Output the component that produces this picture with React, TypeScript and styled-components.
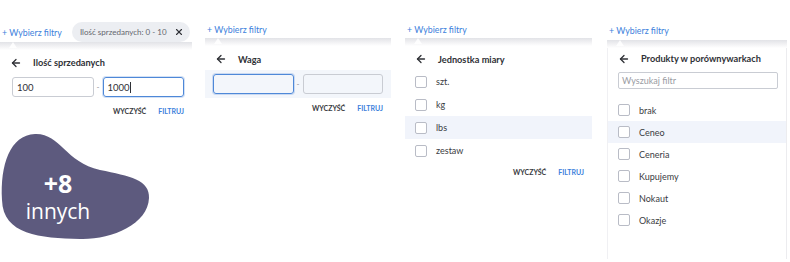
import React from 'react'
import styled, { createGlobalStyle } from 'styled-components'
import { ArrowLeft, X } from 'lucide-react'

const GlobalStyle = createGlobalStyle`
  body {
    margin: 0;
    background: #ffffff;
    font-family: Lato, 'Noto Sans', sans-serif;
    color: #2f3136;
  }
`

const Page = styled.div`
  width: 790px;
  height: 262px;
  display: flex;
  overflow: hidden;
`

const Column = styled.div<{ $width: number; $offset: number }>`
  width: ${(p) => p.$width}px;
  margin-left: ${(p) => p.$offset}px;
  display: flex;
  flex-direction: column;
  flex-shrink: 0;
`

const TopBar = styled.div<{ $top: number; $height: number }>`
  height: ${(p) => p.$height}px;
  margin-top: ${(p) => p.$top}px;
  display: flex;
  align-items: center;
  gap: 10px;
  padding-left: 2px;
`

const PickLink = styled.span`
  font-size: 8.8px;
  color: #3d7fdc;
  white-space: nowrap;
`

const Chip = styled.div`
  height: 20px;
  display: flex;
  align-items: center;
  gap: 7px;
  padding: 0 6px 0 8px;
  border-radius: 10px;
  background: #eceef2;
  font-size: 8px;
  color: #64676e;
  white-space: nowrap;
`

const Strip = styled.div`
  height: 8px;
  position: relative;
  background: linear-gradient(#e2e3e7, #ffffff);
  &::before {
    content: '';
    position: absolute;
    left: 9px;
    top: 0;
    border-left: 4px solid transparent;
    border-right: 4px solid transparent;
    border-bottom: 6px solid #ffffff;
    opacity: 0.85;
  }
`

const Panel = styled.div<{ $bordered?: boolean }>`
  display: flex;
  flex-direction: column;
  background: #fff;
  ${(p) =>
    p.$bordered
      ? 'border-left: 1px solid #f0f0f3; border-right: 1px solid #ececef; padding-bottom: 28px;'
      : ''}
`

const Header = styled.div<{ $height: number }>`
  height: ${(p) => p.$height}px;
  display: flex;
  align-items: center;
  padding: 2px 0 0 10px;
  box-sizing: border-box;
  gap: 11px;
  color: #2f3136;
`

const Title = styled.span`
  font-size: 9.2px;
  font-weight: 700;
`

const RangeRow = styled.div<{ $hover?: boolean; $inset: number }>`
  display: flex;
  align-items: center;
  gap: 3px;
  padding: 4px 8px 4px ${(p) => p.$inset}px;
  background: ${(p) => (p.$hover ? '#f3f6fb' : 'transparent')};
`

const Field = styled.div<{ $focus?: boolean }>`
  flex: 1;
  height: 20px;
  box-sizing: border-box;
  border: 1px solid ${(p) => (p.$focus ? '#4e88d8' : '#c9ccd3')};
  border-radius: 3px;
  box-shadow: ${(p) => (p.$focus ? '0 0 0 1px rgba(78,136,216,0.25)' : 'none')};
  display: flex;
  align-items: center;
  padding-left: 4px;
  font-size: 9.5px;
  color: #2f3136;
`

const Caret = styled.span`
  width: 1px;
  height: 11px;
  background: #2f3136;
`

const Dash = styled.span`
  font-size: 8px;
  color: #8a8d94;
`

const Actions = styled.div<{ $top: number }>`
  display: flex;
  justify-content: flex-end;
  gap: 12px;
  padding: ${(p) => p.$top}px 8px 0 0;
`

const ActionButton = styled.span<{ $primary?: boolean }>`
  font-size: 7px;
  font-weight: 700;
  color: ${(p) => (p.$primary ? '#3d7fdc' : '#3a3c42')};
`

const Search = styled.div`
  height: 17px;
  margin: 5px 8px 10px 10px;
  box-sizing: border-box;
  border: 1px solid #c9ccd3;
  border-radius: 2px;
  display: flex;
  align-items: center;
  padding-left: 3px;
  font-size: 9px;
  color: #9a9ca3;
`

const OptionRow = styled.div<{ $height: number; $hover?: boolean }>`
  height: ${(p) => p.$height}px;
  display: flex;
  align-items: center;
  gap: 9px;
  padding-left: 10px;
  font-size: 9px;
  color: #3a3c42;
  background: ${(p) => (p.$hover ? '#f1f4fb' : 'transparent')};
`

const Box = styled.span`
  width: 12px;
  height: 12px;
  box-sizing: border-box;
  border: 1px solid #b9bcc6;
  border-radius: 2px;
  background: #fff;
`

const Blob = styled.div`
  position: relative;
  width: 152px;
  height: 112px;
  margin-top: 15px;
  display: flex;
  flex-direction: column;
  align-items: center;
  padding: 40px 36px 0 0;
  box-sizing: border-box;
  color: #fff;
  font-family: 'Open Sans', 'Noto Sans', sans-serif;
  svg {
    position: absolute;
    left: 0;
    top: 0;
  }
`

const BlobCount = styled.span`
  position: relative;
  font-size: 25px;
  font-weight: 700;
  line-height: 26px;
`

const BlobLabel = styled.span`
  position: relative;
  font-size: 21px;
  line-height: 24px;
  margin-top: 3px;
`

const BackArrow = () => <ArrowLeft size={12} strokeWidth={2.6} color="#2f3136" />

const Top = ({ top, height, chip }: { top: number; height: number; chip?: string }) => (
  <>
    <TopBar $top={top} $height={height}>
      <PickLink>+ Wybierz filtry</PickLink>
      {chip && (
        <Chip>
          {chip}
          <X size={10} strokeWidth={2.6} color="#2f3136" />
        </Chip>
      )}
    </TopBar>
    <Strip />
  </>
)

const Buttons = ({ top }: { top: number }) => (
  <Actions $top={top}>
    <ActionButton>WYCZYŚĆ</ActionButton>
    <ActionButton $primary>FILTRUJ</ActionButton>
  </Actions>
)

const App = () => {
  const units = ['szt.', 'kg', 'lbs', 'zestaw']
  const shops = ['brak', 'Ceneo', 'Ceneria', 'Kupujemy', 'Nokaut', 'Okazje']

  return (
    <>
      <GlobalStyle />
      <Page>
        <Column $width={192} $offset={0}>
          <Top top={22} height={20} chip="Ilość sprzedanych: 0 - 10" />
          <Panel>
            <Header $height={23}>
              <BackArrow />
              <Title>Ilość sprzedanych</Title>
            </Header>
            <RangeRow $inset={12}>
              <Field>100</Field>
              <Dash>-</Dash>
              <Field $focus>
                1000
                <Caret />
              </Field>
            </RangeRow>
            <Buttons top={6} />
          </Panel>
          <Blob>
            <svg width="152" height="112" viewBox="0 0 152 112">
              <path
                d="M2 70 C0 35 10 5 35 4 C60 3 65 32 100 40 C130 46 150 50 149 68 C148 95 110 110 80 109 C40 108 3 105 2 70 Z"
                fill="#5d5a7e"
              />
            </svg>
            <BlobCount>+8</BlobCount>
            <BlobLabel>innych</BlobLabel>
          </Blob>
        </Column>

        <Column $width={186} $offset={13}>
          <Top top={20} height={18} />
          <Panel>
            <Header $height={24}>
              <BackArrow />
              <Title>Waga</Title>
            </Header>
            <RangeRow $hover $inset={8}>
              <Field $focus />
              <Dash>-</Dash>
              <Field />
            </RangeRow>
            <Buttons top={6} />
          </Panel>
        </Column>

        <Column $width={187} $offset={14}>
          <Top top={20} height={18} />
          <Panel>
            <Header $height={24}>
              <BackArrow />
              <Title>Jednostka miary</Title>
            </Header>
            {units.map((u) => (
              <OptionRow key={u} $height={23} $hover={u === 'lbs'}>
                <Box />
                {u}
              </OptionRow>
            ))}
            <Buttons top={6} />
          </Panel>
        </Column>

        <Column $width={180} $offset={15}>
          <Top top={20} height={20} />
          <Panel $bordered>
            <Header $height={19}>
              <BackArrow />
              <Title>Produkty w porównywarkach</Title>
            </Header>
            <Search>Wyszukaj filtr</Search>
            {shops.map((s) => (
              <OptionRow key={s} $height={22} $hover={s === 'Ceneo'}>
                <Box />
                {s}
              </OptionRow>
            ))}
          </Panel>
        </Column>
      </Page>
    </>
  )
}

export default App
